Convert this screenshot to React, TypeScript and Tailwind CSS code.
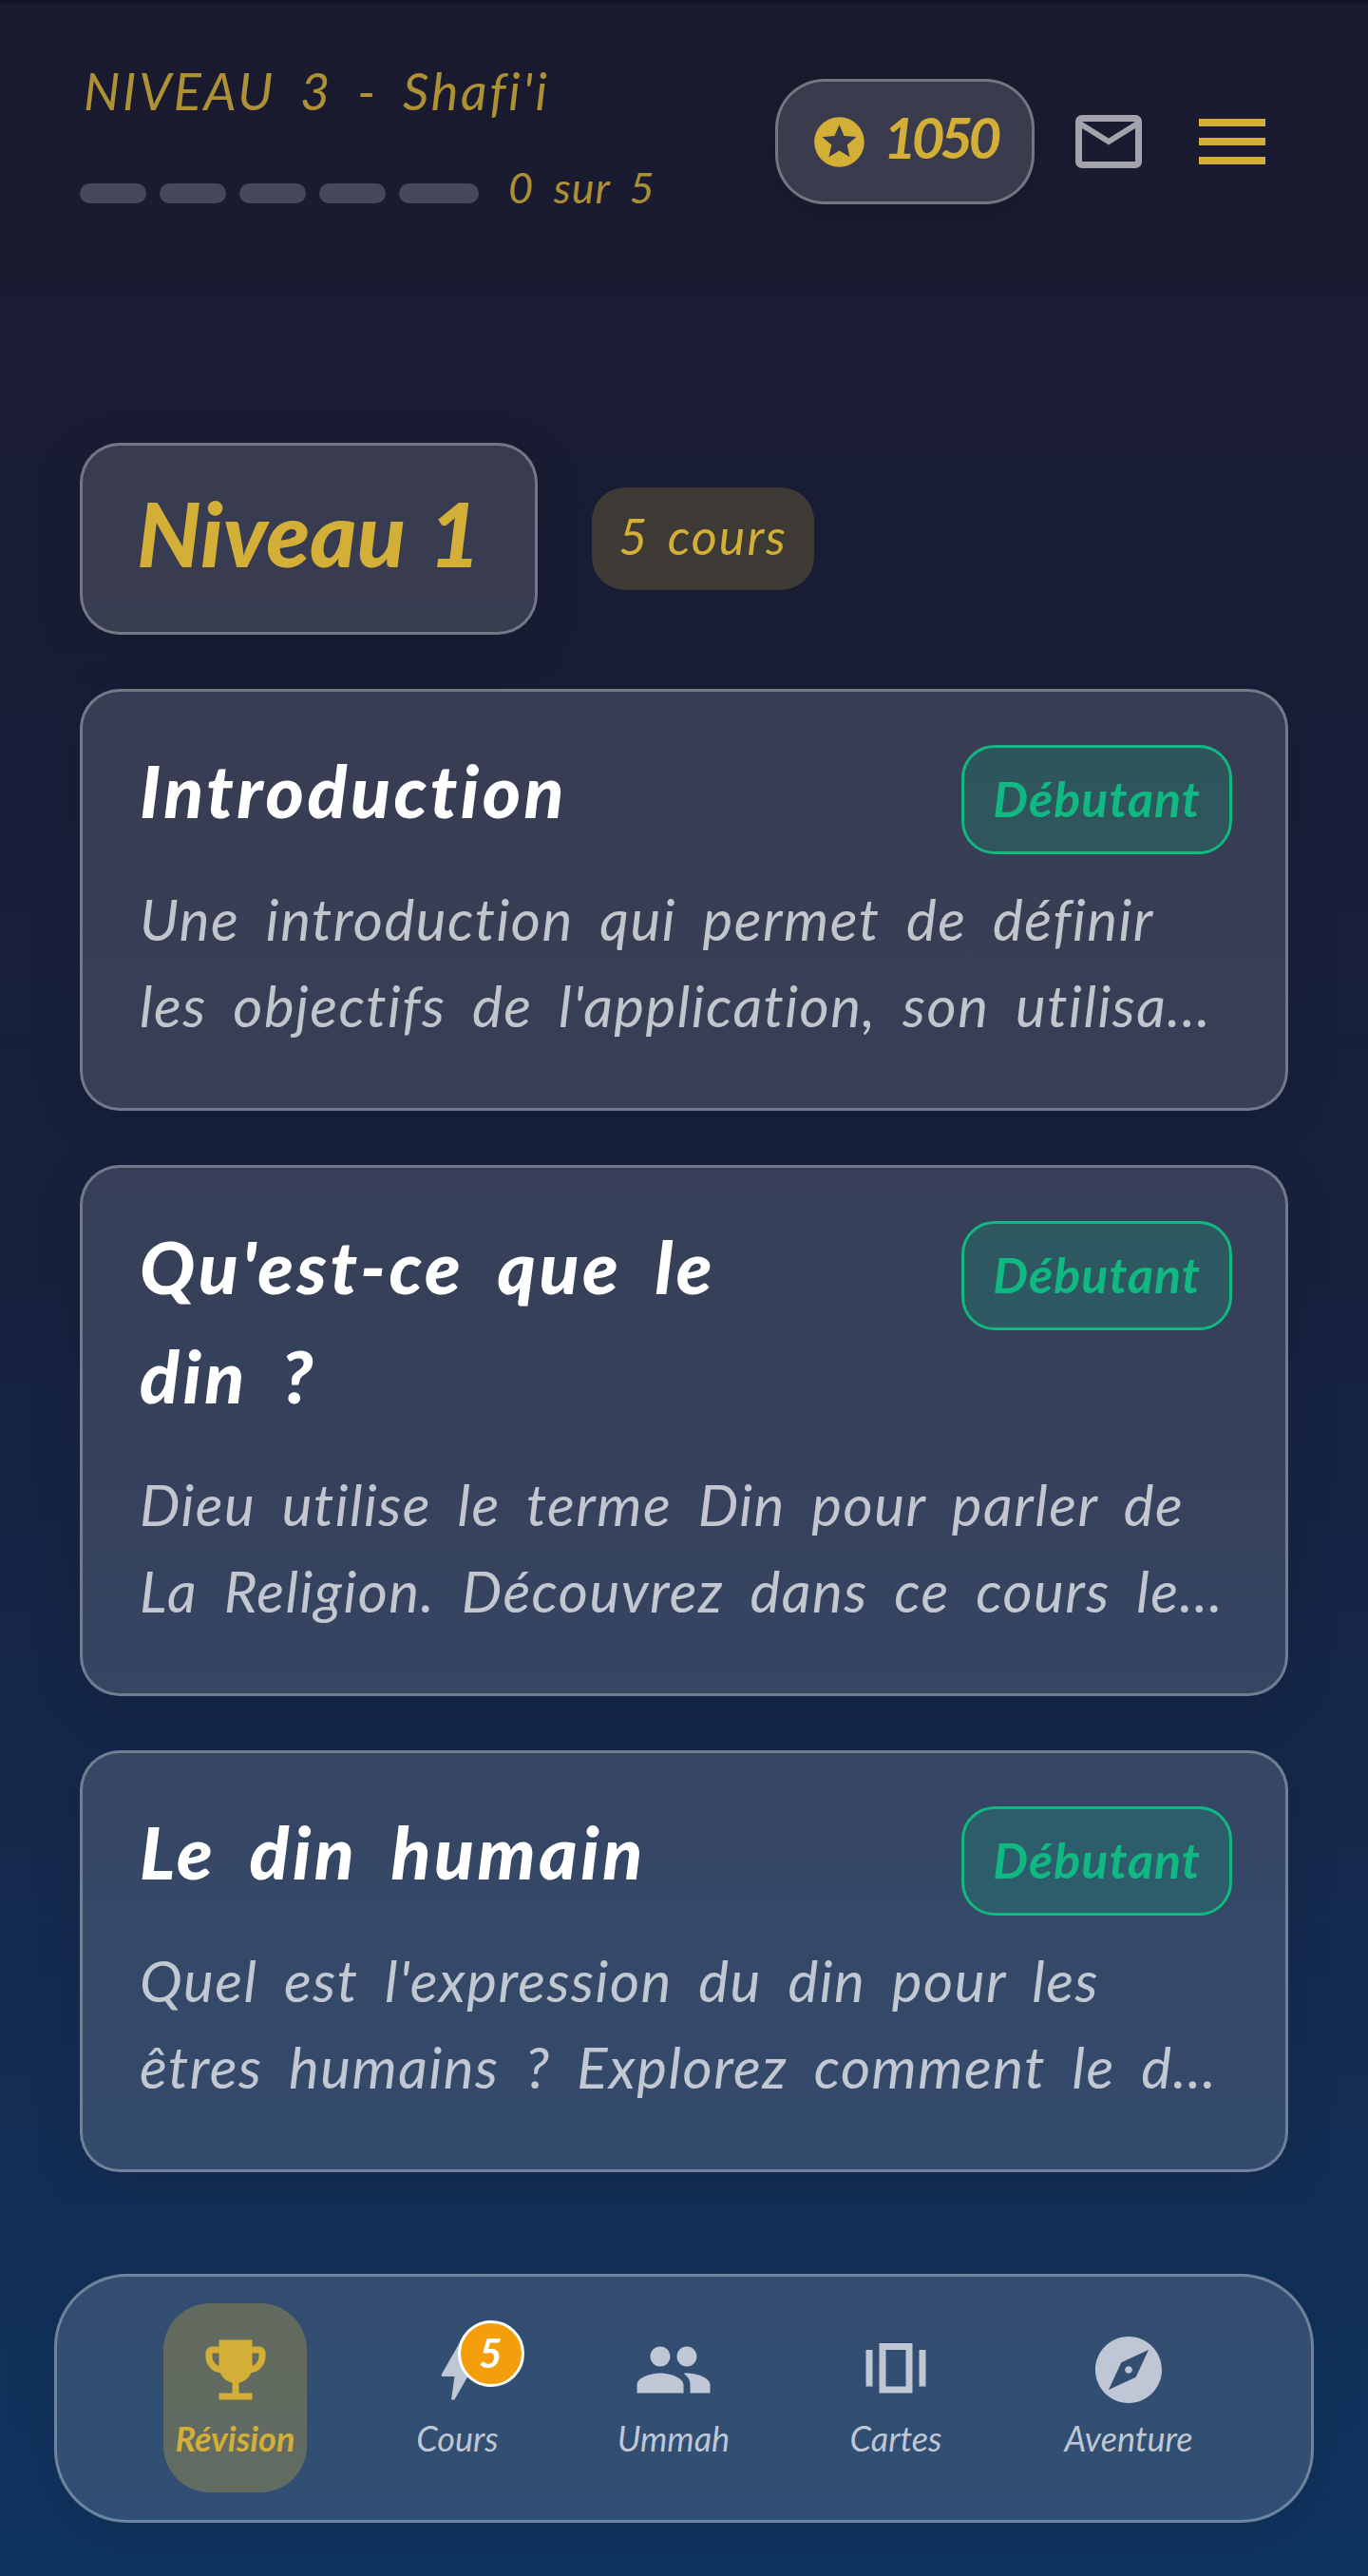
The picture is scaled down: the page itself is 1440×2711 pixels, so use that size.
import { MdEmojiEvents, MdBolt, MdPeople, MdExplore, MdMailOutline, MdStars } from 'react-icons/md';

const courses = [
  {
    title: 'Introduction',
    lines: ['Une introduction qui permet de définir', "les objectifs de l'application, son utilisa..."],
  },
  {
    title: "Qu'est-ce que le din ?",
    lines: ['Dieu utilise le terme Din pour parler de', 'La Religion. Découvrez dans ce cours le...'],
  },
  {
    title: 'Le din humain',
    lines: ["Quel est l'expression du din pour les", 'êtres humains ? Explorez comment le d...'],
  },
];

const font = "font-['Lato',sans-serif] italic";

function CarouselIcon() {
  return (
    <svg viewBox="0 0 24 24" className="w-[84px] h-[84px]" fill="currentColor">
      <path fillRule="evenodd" d="M7 19h10V4H7v15zm2-13h6v11H9V6zM3 6h2v11H3zm16 0h2v11h-2z" />
    </svg>
  );
}

function CourseCard({ title, lines }: { title: string; lines: string[] }) {
  return (
    <div className="rounded-[42px] border-[3.5px] border-white/30 bg-white/[0.14] px-[56px] pt-[56px] pb-[62px] shadow-[0_14px_56px_rgba(0,0,0,0.1)]">
      <div className="flex items-start justify-between mb-[23px]">
        <h3 className={`${font} font-black text-white text-[77px] leading-[115px] tracking-[3.5px] [word-spacing:0.2em] max-w-[680px] pl-[4px] -mt-[10px] pb-[10px]`}>{title}</h3>
        <span className={`${font} font-bold shrink-0 w-[285px] h-[115px] pb-[4px] flex items-center justify-center rounded-[35px] border-[3.5px] border-[#10b981] bg-[#10b981]/20 text-[#10b981] text-[52px] tracking-[1px]`}>
          Débutant
        </span>
      </div>
      <p className={`${font} text-white/70 text-[60px] leading-[91px] tracking-[1.5px] whitespace-nowrap [word-spacing:0.2em] pl-[4px]`}>
        {lines[0]}
        <br />
        {lines[1]}
      </p>
    </div>
  );
}

export default function App() {
  return (
    <div className="w-[1440px] h-[2711px] flex flex-col bg-gradient-to-b from-[#1a1a2e] via-[#16213e] to-[#0f3460] overflow-hidden">
      <div className="h-[4px] bg-black/20" />
      {/* Header */}
      <header className="flex items-start justify-between pl-[84px] pr-[108px] pt-[57px]">
        <div className="flex flex-col gap-[45px]">
          <div className={`${font} text-[#d4af37]/80 text-[54px] leading-[70px] tracking-[2.7px] [word-spacing:0.2em] pl-[4px]`}>NIVEAU 3 - Shafi'i</div>
          <div className="flex items-end gap-[31px]">
            <div className="flex gap-[14px] mb-[4px]">
              {[70, 70, 70, 70, 84].map((w, i) => (
                <div key={i} className="h-[21px] rounded-full bg-white/20" style={{ width: w }} />
              ))}
            </div>
            <span className={`${font} text-[#d4af37]/80 text-[45px] leading-[42px] tracking-[1px] [word-spacing:0.2em]`}>0 sur 5</span>
          </div>
        </div>
        <div className="flex items-center mt-[22px]">
          <div className="w-[273px] h-[132px] flex items-center justify-start pl-[38px] gap-[20px] rounded-[52px] border-[3.5px] border-white/30 bg-white/[0.14] shadow-[0_14px_56px_rgba(0,0,0,0.1)]">
            <MdStars className="w-[63px] h-[63px] -mx-[5px] text-[#d4af37]" />
            <span className={`${font} font-bold text-[#d4af37] text-[60px] tracking-[-5px] pb-[10px]`}>1050</span>
          </div>
          <MdMailOutline className="ml-[36px] w-[84px] h-[84px] text-white/60" />
          <div className="ml-[53px] flex flex-col gap-[12px]">
            <div className="w-[70px] h-[8px] bg-[#d4af37]" />
            <div className="w-[70px] h-[8px] bg-[#d4af37]" />
            <div className="w-[70px] h-[8px] bg-[#d4af37]" />
          </div>
        </div>
      </header>

      {/* Level + courses */}
      <main className="flex-1 px-[84px] pt-[248px] flex flex-col gap-[57px]">
        <div className="flex items-center gap-[57px]">
          <div className="w-[482px] h-[202px] pb-[14px] flex items-center justify-center rounded-[42px] border-[3.5px] border-white/30 bg-white/[0.14] shadow-[0_14px_56px_rgba(0,0,0,0.1)]">
            <span className={`${font} font-black text-[#d4af37] text-[94px] [word-spacing:0.05em]`}>Niveau 1</span>
          </div>
          <span className={`${font} w-[234px] h-[108px] pb-[6px] flex items-center justify-center rounded-[35px] bg-[#d4af37]/20 text-[#d4af37] text-[52px] tracking-[2px] [word-spacing:0.1em]`}>5 cours</span>
        </div>
        {courses.map((c) => (
          <CourseCard key={c.title} title={c.title} lines={c.lines} />
        ))}
      </main>

      {/* Bottom nav */}
      <nav className="mx-[57px] mb-[56px] h-[262px] rounded-[77px] border-[3.5px] border-white/30 bg-white/[0.14] py-[28px] px-[112px] flex items-start justify-between shadow-[0_14px_56px_rgba(0,0,0,0.1)]">
        <div className="w-[151px] h-[199px] pt-[28px] flex flex-col items-center gap-[4px] rounded-[49px] bg-[#d4af37]/30 text-[#d4af37]">
          <MdEmojiEvents className="w-[84px] h-[84px]" />
          <span className={`${font} font-bold text-[36px] leading-[52px]`}>Révision</span>
        </div>
        <div className="w-[109px] pt-[28px] flex flex-col items-center gap-[4px] text-[#bfc7d4]">
          <div className="relative w-[84px] h-[84px]">
            <MdBolt className="w-[84px] h-[84px]" />
            <span className={`${font} absolute -top-[10.5px] left-[42px] w-[70px] h-[70px] flex items-center justify-center rounded-full border-[3.5px] border-white bg-[#f59e0b] text-white font-bold text-[42px]`}>5</span>
          </div>
          <span className={`${font} text-[36px] leading-[52px]`}>Cours</span>
        </div>
        <div className="w-[138px] pt-[28px] flex flex-col items-center gap-[4px] text-[#bfc7d4]">
          <MdPeople className="w-[84px] h-[84px]" />
          <span className={`${font} text-[36px] leading-[52px]`}>Ummah</span>
        </div>
        <div className="w-[122px] pt-[28px] flex flex-col items-center gap-[4px] text-[#bfc7d4]">
          <CarouselIcon />
          <span className={`${font} text-[36px] leading-[52px]`}>Cartes</span>
        </div>
        <div className="w-[160px] pt-[28px] flex flex-col items-center gap-[4px] text-[#bfc7d4]">
          <MdExplore className="w-[84px] h-[84px]" />
          <span className={`${font} text-[36px] leading-[52px]`}>Aventure</span>
        </div>
      </nav>
    </div>
  );
}
